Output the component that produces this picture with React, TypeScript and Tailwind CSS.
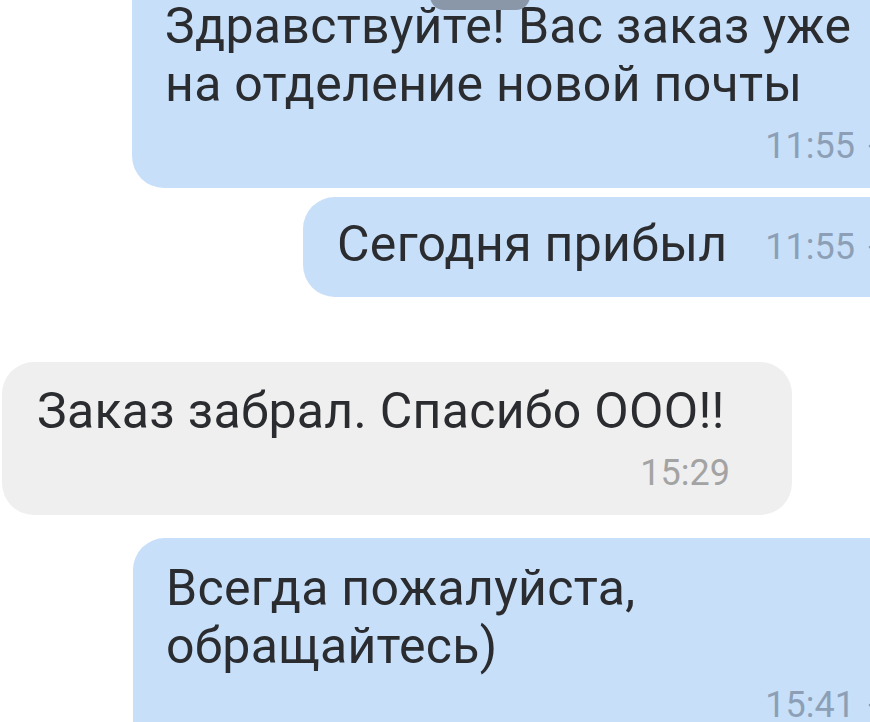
import { Check } from 'lucide-react'

function Time({ t, own }: { t: string; own?: boolean }) {
  return (
    <span className={`flex items-center gap-[11px] text-[36px] leading-[36px] ${own ? 'text-[#8d9fb6]' : 'text-[#a3a3a3]'}`}>
      {t}
      {own && <Check className="h-[24px] w-[24px]" strokeWidth={2.5} />}
    </span>
  )
}

const msg = 'whitespace-nowrap text-[50px] leading-[58px] tracking-[0.3px]'

export default function App() {
  return (
    <div
      className="relative h-[722px] w-[870px] overflow-hidden bg-white text-[#2a2c2f]"
      style={{ fontFamily: 'Roboto, "Noto Sans", sans-serif' }}
    >
      {/* floating date pill */}
      <div className="absolute left-[430px] top-[-20px] z-10 h-[30px] w-[100px] rounded-[14px] bg-[#8a97a9]" />

      <div className="flex flex-col">
        {/* outgoing */}
        <div className="ml-[132px] mr-[-30px] mt-[-30px] rounded-b-[32px] rounded-tl-[32px] bg-[#c7dff8] pb-[24px] pl-[33px] pr-[10px] pt-[27px]">
          <p className={msg}>
            Здравствуйте! Вас заказ уже
            <br />
            на отделение новой почты
          </p>
          <div className="mt-[15px] flex justify-end">
            <Time t="11:55" own />
          </div>
        </div>

        <div className="ml-[303px] mr-[-30px] mt-[9px] flex h-[100px] items-center justify-between rounded-l-[32px] bg-[#c7dff8] pl-[34px] pr-[10px]">
          <span className={`pb-[6px] ${msg}`}>Сегодня прибыл</span>
          <Time t="11:55" own />
        </div>

        {/* incoming */}
        <div className="ml-[2px] mt-[65px] w-[790px] rounded-[32px] bg-[#efefef] pb-[24px] pl-[35px] pr-[62px] pt-[20px]">
          <p className={msg}>Заказ забрал. Спасибо ООО!!</p>
          <div className="mt-[15px] flex justify-end">
            <Time t="15:29" />
          </div>
        </div>

        {/* outgoing */}
        <div className="ml-[133px] mr-[-30px] mt-[23px] rounded-l-[32px] bg-[#c7dff8] pb-[40px] pl-[33px] pr-[10px] pt-[21px]">
          <p className={msg}>
            Всегда пожалуйста,
            <br />
            обращайтесь)
          </p>
          <div className="mt-[12px] flex justify-end">
            <Time t="15:41" own />
          </div>
        </div>
      </div>
    </div>
  )
}
